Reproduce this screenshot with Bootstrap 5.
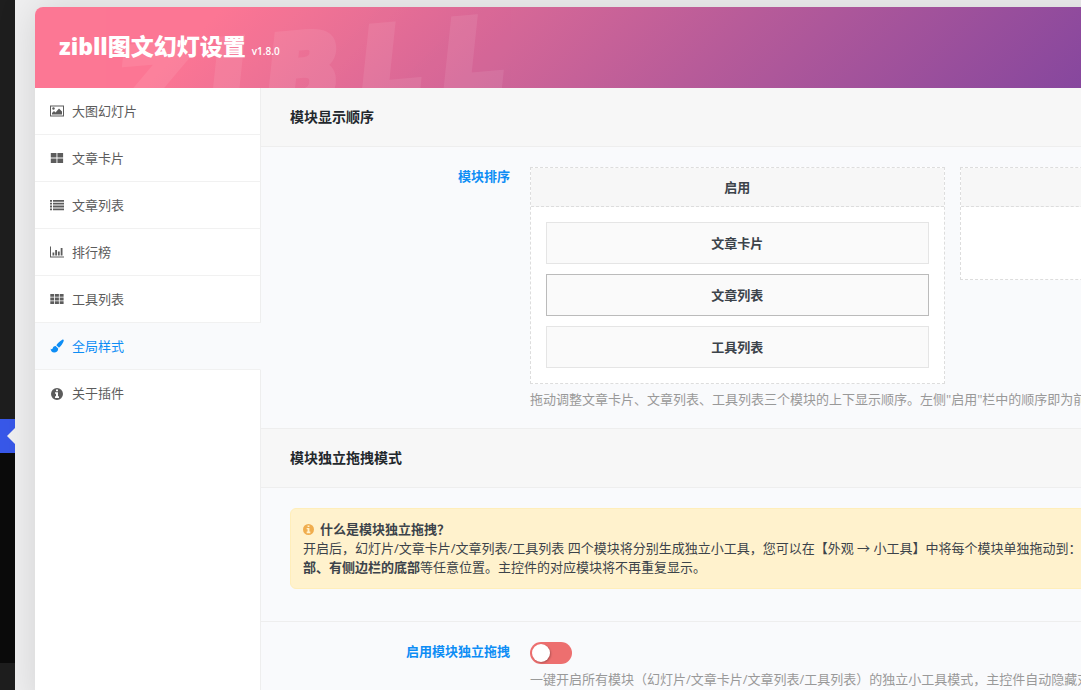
<!DOCTYPE html>
<html lang="zh-CN">
<head>
<meta charset="utf-8">
<meta name="viewport" content="width=device-width, initial-scale=1">
<title>zibll图文幻灯设置</title>
<link href="https://cdn.jsdelivr.net/npm/bootstrap@5.3.0/dist/css/bootstrap.min.css" rel="stylesheet">
<style>
:root{--line:#eee;--blue:#0d8df5}
body{font-family:"Open Sans","Noto Sans CJK SC",sans-serif;font-size:13px;line-height:19px;color:#3c434a;background:#f0f0f1;overflow:hidden}
.rail{width:15px;background:#1e1e1e}
.rail-top{height:419px}
.rail-current{height:34px;background:#3858e9}
.rail-current svg{display:block;width:15px;height:34px}
.rail-sub{height:210px;background:#0b0b0b}
/* the options panel is wider than the visible area */
.panel{margin:7px -322px 0 20px;box-shadow:0 0 40px rgba(0,0,0,.13);border-radius:8px 0 0 0}
.panel-head{height:81px;border-radius:8px 0 0 0;background:linear-gradient(135deg,#fc7794 13%,#b75b99 50%,#84469e 79%,#7c429f);color:#fff;overflow:hidden}
.panel-head h1{font-size:23px;line-height:30px;font-weight:800;padding:24px;position:relative}
.panel-head h1 small{font-size:10px;font-weight:600}
.watermark{left:88px;top:31px;gap:20px;font:italic 700 98px/98px "DejaVu Sans",sans-serif;color:#fff;-webkit-text-stroke:8px #fff;opacity:.08;transform:rotate(-5deg);transform-origin:0 100%}
.side{width:226px;background:#fff}
.side a{display:flex;align-items:center;gap:8px;height:47px;padding:0 15px;color:#5c5c5c;text-decoration:none;border-bottom:1px solid #f1f1f1;border-right:1px solid #eee}
.side a:last-of-type{border-bottom:0}
.side a.active{color:var(--blue);background:#f9fafc;border-right-color:#f9fafc}
.side .rest{border-right:1px solid #eee}
.side svg{width:14px;height:14px}
.content-area{background:#f9fafc}
.section-title{font-size:14px;line-height:18px;font-weight:700;color:#23282d;background:#f7f7f7;border-bottom:1px solid var(--line);padding:20px 29px;margin:0}
.field{padding:20px 29px 19px;gap:20px}
.field+.section-title,.field+.field{border-top:1px solid var(--line)}
.field-label{width:220px;color:var(--blue);font-weight:700;text-align:right}
.sorter{gap:15px}
.sort-col{border:1px dashed #ddd;background:#fff;min-height:113px}
.sort-col h3{font-size:13px;line-height:19px;font-weight:700;height:39px;padding:10px;margin:0;text-align:center;background:#f7f7f7;border-bottom:1px dashed #ddd}
.sort-list{padding:15px;gap:10px}
.sort-item{height:42px;border:1px solid #e5e5e5;background:#fafafa;font-weight:700}
.sort-item.held{border-color:#bbb}
.help{color:#999;white-space:nowrap;margin-top:6px}
.notice{background:#fff2cd;border:1px solid #ffeeba;border-radius:6px;padding:11px 12px;margin-bottom:13px}
.notice svg{width:11px;height:11px;margin:0 6px 0 0;vertical-align:-1px}
.toggle{appearance:none;display:block;width:42px;height:22px;border-radius:11px;background:#ed6f6f;margin:0;position:relative}
.toggle::before{content:"";position:absolute;left:2px;top:2px;width:18px;height:18px;border-radius:50%;background:#fff;box-shadow:1px 1px 2px rgba(0,0,0,.25)}
</style>
</head>
<body>
<div class="d-flex min-vh-100">
  <div class="rail flex-shrink-0">
    <div class="rail-top"></div>
    <div class="rail-current"><svg viewBox="0 0 15 34"><path d="M15 9 7 17l8 8z" fill="#f0f0f1"/></svg></div>
    <div class="rail-sub"></div>
  </div>
  <main class="panel flex-grow-1 d-flex flex-column">
    <header class="panel-head position-relative">
      <div class="watermark position-absolute d-flex" aria-hidden="true"><span>Z</span><span>I</span><span>B</span><span>L</span><span>L</span></div>
      <h1 class="m-0">zibll图文幻灯设置 <small>v1.8.0</small></h1>
    </header>
    <div class="d-flex flex-grow-1">
      <nav class="side flex-shrink-0 d-flex flex-column">
        <a href="#slides"><svg viewBox="0 0 14 14" fill="currentColor"><path fill-rule="evenodd" d="M0 1.500h14v11H0zM1 2.500v9h12v-9z"/><circle cx="3.500" cy="4.500" r="1.200"/><path d="M2 10.500V9l2-2 1.500 1.500L9 4.500l3 3v3z"/></svg>大图幻灯片</a>
        <a href="#cards"><svg viewBox="0 0 14 14" fill="currentColor"><path d="M.8 2h5.700v4.600H.8zM7.400 2h5.700v4.600H7.400zM.8 7.500h5.700v4.600H.8zM7.400 7.500h5.700v4.600H7.400z"/></svg>文章卡片</a>
        <a href="#posts"><svg viewBox="0 0 14 14" fill="currentColor"><path d="M0 2h2v1.800H0zM3 2h11v1.800H3zM0 4.800h2v1.800H0zM3 4.800h11v1.800H3zM0 7.600h2v1.800H0zM3 7.600h11v1.800H3zM0 10.400h2v1.800H0zM3 10.400h11v1.800H3z"/></svg>文章列表</a>
        <a href="#rank"><svg viewBox="0 0 14 14" fill="currentColor"><path d="M0 1.500h1v10h13v1H0zM2.500 7.500h1.800v3H2.500zM5.200 5H7v5.500H5.200zM7.900 6.500h1.800v4H7.900zM10.700 3h1.800v7.500h-1.800z"/></svg>排行榜</a>
        <a href="#tools"><svg viewBox="0 0 14 14" fill="currentColor"><path d="M.3 2h3.900v2.800H.3zM5 2h3.900v2.800H5zM9.700 2h3.900v2.800H9.700zM.3 5.600h3.900v2.800H.3zM5 5.600h3.900v2.800H5zM9.700 5.600h3.900v2.800H9.700zM.3 9.200h3.900V12H.3zM5 9.200h3.900V12H5zM9.700 9.200h3.900V12H9.700z"/></svg>工具列表</a>
        <a href="#style" class="active" aria-current="page"><svg viewBox="0 0 14 14" fill="currentColor"><path d="M12.300.7c.8-.4 1.700.3 1.400 1.200-.5 1.800-2.700 5-4.700 6.800L6.300 6.200C7.900 4 10.400 1.600 12.300.7zM5.600 7.100l2.600 2.400c.1 2.500-1.800 4-4 4C2 13.500.8 12 .6 9.800c.9.600 1.700.5 2.100-.6.5-1.500 1.700-2.200 2.900-2.100z"/></svg>全局样式</a>
        <a href="#about"><svg viewBox="0 0 14 14" fill="currentColor"><path fill-rule="evenodd" d="M7 1a6 6 0 1 0 0 12A6 6 0 0 0 7 1zM6 2.600h2v1.700H6zM5 5.300h3v4h1V11H5V9.300h1V6.700H5z"/></svg>关于插件</a>
        <div class="rest flex-grow-1"></div>
      </nav>
      <div class="content-area flex-grow-1">
        <h2 class="section-title">模块显示顺序</h2>
        <section class="field d-flex">
          <div class="field-label flex-shrink-0">模块排序</div>
          <div class="flex-grow-1">
            <div class="sorter d-flex align-items-start">
              <div class="sort-col flex-fill w-50">
                <h3>启用</h3>
                <div class="sort-list d-flex flex-column">
                  <div class="sort-item d-flex align-items-center justify-content-center">文章卡片</div>
                  <div class="sort-item held d-flex align-items-center justify-content-center">文章列表</div>
                  <div class="sort-item d-flex align-items-center justify-content-center">工具列表</div>
                </div>
              </div>
              <div class="sort-col flex-fill w-50"><h3></h3></div>
            </div>
            <div class="help">拖动调整文章卡片、文章列表、工具列表三个模块的上下显示顺序。左侧"启用"栏中的顺序即为前</div>
          </div>
        </section>
        <h2 class="section-title">模块独立拖拽模式</h2>
        <section class="field">
          <div class="notice">
            <svg viewBox="1 1 12 12" fill="#f0ad4e"><path fill-rule="evenodd" d="M7 1a6 6 0 1 0 0 12A6 6 0 0 0 7 1zM6 2.600h2v1.700H6zM5 5.300h3v4h1V11H5V9.300h1V6.700H5z"/></svg><b>什么是模块独立拖拽？</b><br>
            开启后，幻灯片/文章卡片/文章列表/工具列表 四个模块将分别生成独立小工具，您可以在【外观 → 小工具】中将每个模块单独拖动到：<br>
            <b>部、有侧边栏的底部</b>等任意位置。主控件的对应模块将不再重复显示。
          </div>
        </section>
        <section class="field d-flex">
          <label class="field-label flex-shrink-0" for="split">启用模块独立拖拽</label>
          <div class="flex-grow-1">
            <input class="toggle" type="checkbox" role="switch" id="split">
            <div class="help">一键开启所有模块（幻灯片/文章卡片/文章列表/工具列表）的独立小工具模式，主控件自动隐藏对</div>
          </div>
        </section>
      </div>
    </div>
  </main>
</div>
<script src="https://cdn.jsdelivr.net/npm/bootstrap@5.3.0/dist/js/bootstrap.bundle.min.js"></script>
</body>
</html>
